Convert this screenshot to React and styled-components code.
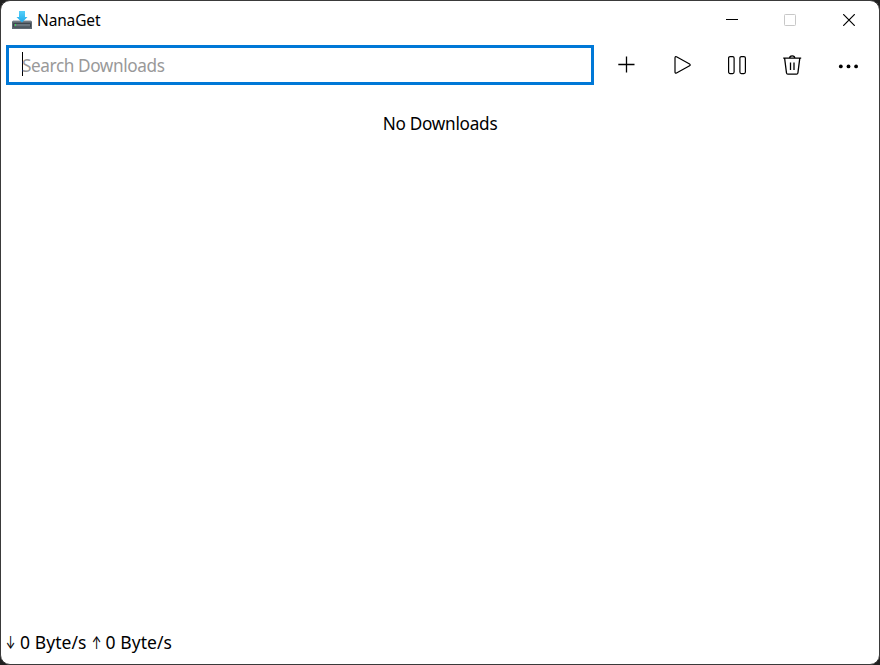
import React from "react";
import styled, { createGlobalStyle } from "styled-components";

const GlobalStyle = createGlobalStyle`
  * { box-sizing: border-box; }
  body { margin: 0; background: #202020; overflow: hidden; font-family: "Noto Sans", "Open Sans", sans-serif; color: #000; }
`;

const Window = styled.div`
  width: 880px;
  height: 665px;
  display: flex;
  flex-direction: column;
  background: #fff;
  border: 1px solid #3a3a3a;
  border-radius: 10px;
  overflow: hidden;
`;

const TitleBar = styled.header`
  display: flex;
  align-items: center;
  height: 37px;
  margin-bottom: 2px;
  padding: 0 1px 0 11px;
`;

const AppIcon = styled.svg`
  width: 20px;
  height: 20px;
  margin: 1px 5px 0 0;
`;

const Title = styled.span`
  flex: 1;
  font-size: 15.5px;
  line-height: 20px;
  margin-top: 1px;
  letter-spacing: -0.15px;
`;

const CaptionButton = styled.button`
  width: 58.5px;
  height: 37px;
  padding: 0;
  border: 0;
  background: transparent;
  display: grid;
  place-items: center;
  color: ${(p) => (p.disabled ? "#c8c8c8" : "#000")};
`;

const Toolbar = styled.div`
  display: flex;
  align-items: center;
  height: 50px;
  padding: 0 3px 0 5px;
`;

const SearchBox = styled.div`
  display: flex;
  align-items: center;
  width: 588px;
  height: 40px;
  padding-left: 13px;
  border: 3px solid #0078d7;
  margin-right: 5px;
`;

const Caret = styled.span`
  width: 1px;
  height: 24px;
  margin: -3px -1px 0 0;
  background: #000;
`;

const Placeholder = styled.span`
  font-size: 17.2px;
  line-height: 24px;
  margin-top: 2px;
  letter-spacing: -0.4px;
  color: #999;
`;

const ToolButton = styled.button`
  width: 55.5px;
  height: 48px;
  border: 0;
  padding: 0;
  background: transparent;
  display: grid;
  place-items: center;
`;

const Glyph = styled.svg`
  width: ${(p) => p.$size}px;
  height: ${(p) => p.$size}px;
  fill: none;
  stroke: currentColor;
  stroke-width: ${(p) => p.$weight || 1.3};
  stroke-linejoin: round;
`;

const Content = styled.main`
  flex: 1;
  padding-top: 22px;
  text-align: center;
  font-size: 17.2px;
  line-height: 24px;
  letter-spacing: -0.27px;
`;

const StatusBar = styled.footer`
  display: flex;
  height: 34px;
  padding-left: 5px;
  font-size: 17.5px;
  line-height: 24px;
`;

const Arrow = styled.span`
  width: 9px;
  margin-right: 5px;
  display: flex;
  justify-content: center;
  font-family: "Inter", sans-serif;
  font-size: 17px;
  line-height: 26px;
  transform: scaleX(0.68);
`;

const Rate = styled.span`
  width: 71.5px;
  white-space: nowrap;
  letter-spacing: 0.08px;
`;

export default function App() {
  return (
    <>
      <GlobalStyle />
      <Window>
        <TitleBar>
          <AppIcon viewBox="0 0 20 20">
            <defs>
              <linearGradient id="arrow" x1="0" y1="0" x2="0" y2="1">
                <stop offset="0" stopColor="#55d0fa" />
                <stop offset="1" stopColor="#20a9e8" />
              </linearGradient>
            </defs>
            <path d="M1 10.500h18l1 1.500H0z" fill="#87929b" />
            <path d="M0 11.500h20v7.500H0z" fill="#5f6972" />
            <path d="M1.500 13.500h17v3.500h-17z" fill="#69747d" stroke="#3d464e" strokeWidth="1" />
            <path d="M3 14h1v2H3z" fill="#36dc55" />
            <path d="M7 1h6v6H15.500L10 12.500 4.500 7h2.500z" fill="url(#arrow)" />
          </AppIcon>
          <Title>NanaGet</Title>
          <CaptionButton aria-label="Minimize">
            <Glyph $size={12} $weight={1} viewBox="0 0 12 12"><path d="M0 5.500h12" /></Glyph>
          </CaptionButton>
          <CaptionButton aria-label="Maximize" disabled>
            <Glyph $size={12} $weight={1} viewBox="0 0 12 12"><rect x=".5" y=".5" width="11" height="11" rx=".8" /></Glyph>
          </CaptionButton>
          <CaptionButton aria-label="Close">
            <Glyph $size={12} $weight={1.2} viewBox="0 0 12 12"><path d="M.2.2l11.600 11.600M11.800.2L.2 11.800" /></Glyph>
          </CaptionButton>
        </TitleBar>
        <Toolbar>
          <SearchBox>
            <Caret />
            <Placeholder>Search Downloads</Placeholder>
          </SearchBox>
          <ToolButton aria-label="Add">
            <Glyph $size={20} viewBox="0 0 20 20"><path d="M2.300 9.500h16.200M10.500 1.500v16" /></Glyph>
          </ToolButton>
          <ToolButton aria-label="Start">
            <Glyph $size={20} $weight={1.2} viewBox="0 0 20 20"><path d="M3 2.900Q3 1.200 4.500 1.800L17.600 9.100Q18.800 10 17.600 10.700L4.500 18Q3 18.600 3 17.100z" /></Glyph>
          </ToolButton>
          <ToolButton aria-label="Pause">
            <Glyph $size={20} $weight={1.2} viewBox="0 0 20 20"><rect x="1.600" y="1.600" width="5.500" height="17" rx="1.500" /><rect x="12.900" y="1.600" width="5.500" height="17" rx="1.500" /></Glyph>
          </ToolButton>
          <ToolButton aria-label="Delete">
            <Glyph $size={20} viewBox="0 0 20 20"><path d="M.2 3.200h18M6.600 3.200a2.600 2.300 0 0 1 5.200 0M1.600 3.200l1.900 14.800Q3.700 19.200 4.800 19.200h8.800q1.100 0 1.300-1.200l1.900-14.800M7.500 7.500v7.500M11 7.500v7.500" /></Glyph>
          </ToolButton>
          <ToolButton aria-label="More">
            <Glyph $size={20} viewBox="0 0 20 20"><g fill="currentColor" stroke="none"><circle cx="2.800" cy="11.400" r="1.900" /><circle cx="10.500" cy="11.400" r="1.900" /><circle cx="18.100" cy="11.400" r="1.900" /></g></Glyph>
          </ToolButton>
        </Toolbar>
        <Content>No Downloads</Content>
        <StatusBar>
          <Arrow>↓</Arrow><Rate>0 Byte/s</Rate>
          <Arrow>↑</Arrow><Rate>0 Byte/s</Rate>
        </StatusBar>
      </Window>
    </>
  );
}
